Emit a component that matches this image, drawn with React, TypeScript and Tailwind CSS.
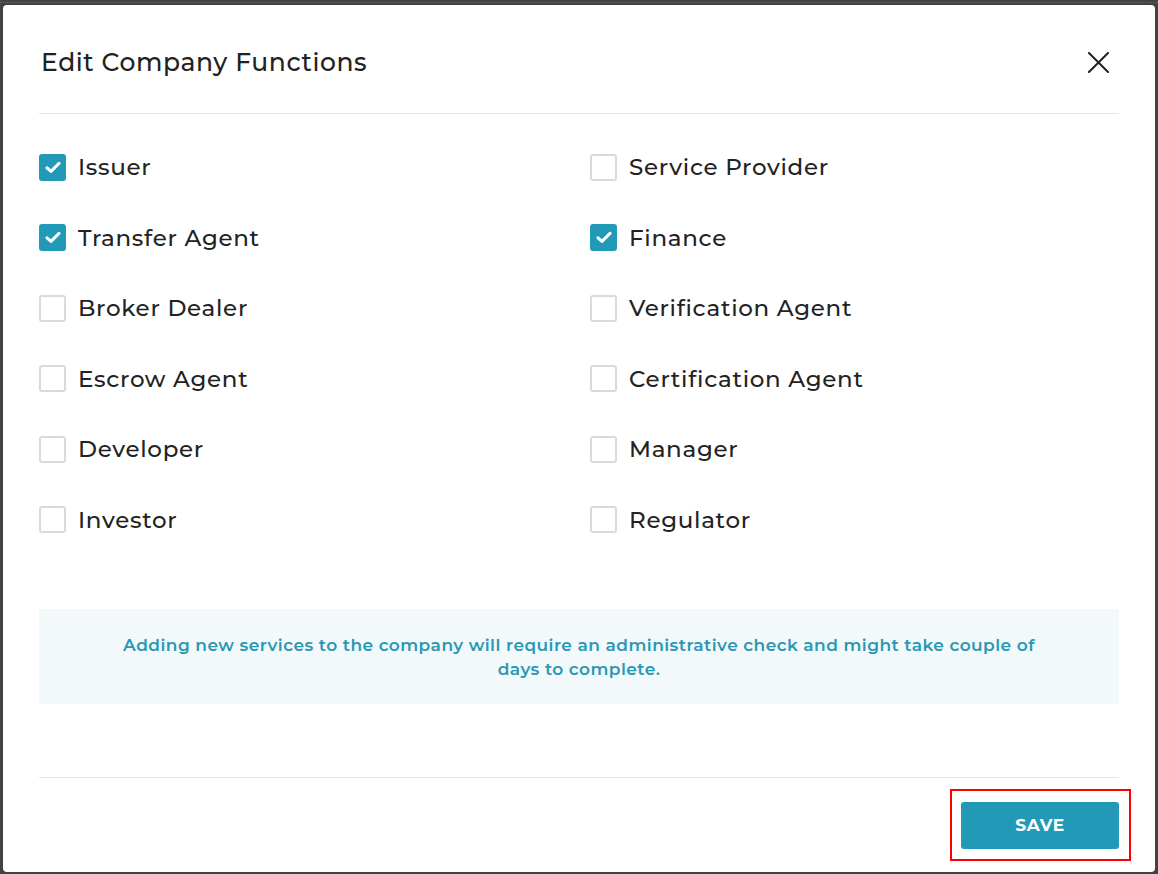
import React from "react";

const items: [string, boolean][] = [
  ["Issuer", true],
  ["Service Provider", false],
  ["Transfer Agent", true],
  ["Finance", true],
  ["Broker Dealer", false],
  ["Verification Agent", false],
  ["Escrow Agent", false],
  ["Certification Agent", false],
  ["Developer", false],
  ["Manager", false],
  ["Investor", false],
  ["Regulator", false],
];

function Box({ checked }: { checked: boolean }) {
  if (checked) {
    return (
      <span className="flex h-[27px] w-[27px] shrink-0 items-center justify-center rounded-[3px] bg-[#2399b8]">
        <svg width="16" height="13" viewBox="0 0 16 13" fill="none">
          <path d="M2 6.8 L6 10.4 L14 2.4" stroke="white" strokeWidth="3" strokeLinecap="round" strokeLinejoin="round" />
        </svg>
      </span>
    );
  }
  return <span className="h-[27px] w-[27px] shrink-0 rounded-[3px] border-2 border-[#d3dcdf] bg-white" />;
}

export default function App() {
  return (
    <div
      className="relative h-[874px] w-[1158px] overflow-hidden bg-[#424242]"
      style={{ fontFamily: '"Montserrat", "Noto Sans", sans-serif' }}
    >
      <div className="h-[3px] w-full border-b border-dotted border-[#6a6a6a]" />
      <div className="ml-[3px] mt-[2px] flex h-[867px] w-[1152px] flex-col rounded-[4px] bg-white px-[36px]">
        <div className="flex items-center justify-between pt-[36px] pb-[30px]">
          <h1 className="pl-[2px] text-[25px] font-medium leading-[42px] tracking-[0.6px] text-[#222]">
            Edit Company Functions
          </h1>
          <button className="mr-[10px] flex h-[22px] w-[22px] items-center justify-center">
            <svg width="21" height="21" viewBox="0 0 21 21" fill="none">
              <path d="M1 1 L20 20 M20 1 L1 20" stroke="#222" strokeWidth="2" strokeLinecap="square" />
            </svg>
          </button>
        </div>
        <div className="h-px bg-[#e6e6e6]" />
        <div className="grid grid-cols-2 gap-x-[22px] pt-[18px]">
          {items.map(([label, checked]) => (
            <label key={label} className="flex h-[70.5px] items-center gap-[12px]">
              <Box checked={checked} />
              <span className="text-[23px] font-medium tracking-[0.7px] text-[#222]">{label}</span>
            </label>
          ))}
        </div>
        <div className="mt-[54px] flex h-[95px] items-center justify-center bg-[#f3f8fb] text-center">
          <p className="text-[17px] font-semibold leading-[24px] tracking-[0.45px] text-[#2998b4]">
            Adding new services to the company will require an administrative check and might take couple of
            <br />
            days to complete.
          </p>
        </div>
        <div className="mt-[73px] h-px bg-[#e6e6e6]" />
        <div className="flex justify-end pt-[24px]">
          <div className="relative">
            <button className="h-[47px] w-[158px] rounded-[3px] bg-[#2399b8] text-[17px] font-bold tracking-[0.6px] text-white">
              SAVE
            </button>
            <div className="pointer-events-none absolute -left-[11px] -top-[13px] -right-[12px] -bottom-[12px] border-2 border-[#ff0000]" />
          </div>
        </div>
      </div>
    </div>
  );
}
